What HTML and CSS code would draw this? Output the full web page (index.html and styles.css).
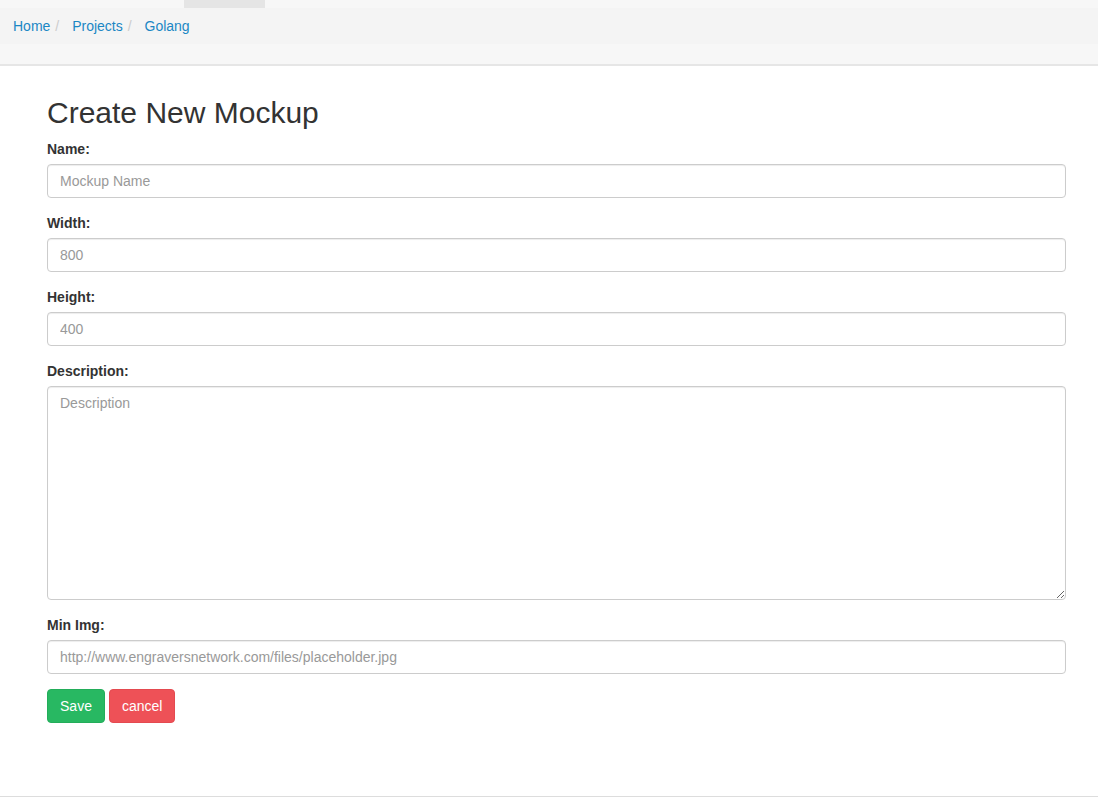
FILE: index.html
```html
<!DOCTYPE html>
<html>
<head>
<meta charset="utf-8">
<link rel="stylesheet" href="styles.css">
</head>
<body>
<div class="topstrip"><div class="tab"></div></div>
<div class="header">
  <ol class="breadcrumb">
    <li><a href="#">Home</a></li>
    <li><a href="#">Projects</a></li>
    <li><a href="#">Golang</a></li>
  </ol>
  <div class="subbar"></div>
</div>
<main class="content">
  <h2 class="title">Create New Mockup</h2>
  <form class="form">
    <div class="group">
      <label class="label">Name:</label>
      <input class="control" type="text" placeholder="Mockup Name">
    </div>
    <div class="group">
      <label class="label">Width:</label>
      <input class="control" type="text" placeholder="800">
    </div>
    <div class="group">
      <label class="label">Height:</label>
      <input class="control" type="text" placeholder="400">
    </div>
    <div class="group">
      <label class="label">Description:</label>
      <textarea class="control area" placeholder="Description"></textarea>
    </div>
    <div class="group">
      <label class="label">Min Img:</label>
      <input class="control" type="text" placeholder="http://www.engraversnetwork.com/files/placeholder.jpg">
    </div>
    <div class="actions">
      <button type="button" class="btn save">Save</button>
      <button type="button" class="btn cancel">cancel</button>
    </div>
  </form>
</main>
<div class="footer"></div>
</body>
</html>
```
FILE: styles.css
```css
* { box-sizing: border-box; }
html, body { margin: 0; padding: 0; background: #fff; }
body {
  font-family: "Liberation Sans", Arial, sans-serif;
  font-size: 14px;
  line-height: 20px;
  color: #333;
}
.topstrip {
  height: 8px;
  background: #f7f7f7;
  padding-left: 184px;
}
.tab {
  width: 81px;
  height: 8px;
  background: #e5e5e5;
}
.header {
  background: #f7f7f7;
  border-bottom: 2px solid #e6e6e6;
}
.breadcrumb {
  margin: 0;
  padding: 8px 13px;
  list-style: none;
  background: #f4f4f4;
  height: 36px;
  display: flex;
}
.breadcrumb li { display: block; }
.breadcrumb li + li::before {
  content: "/\00a0";
  padding: 0 5px 0 5px;
  color: #ccc;
}
.breadcrumb a {
  color: #1b87c4;
  text-decoration: none;
}
.breadcrumb li + li a { margin-left: 4px; }
.subbar { height: 20px; }
.content {
  padding: 30px 32px 0 47px;
  height: 730px;
}
.title {
  margin: 0 0 10px;
  font-size: 30px;
  font-weight: 500;
  line-height: 33px;
  color: #333;
}
.form { width: 1019px; }
.group {
  display: flex;
  flex-direction: column;
  margin-bottom: 15px;
}
.label {
  font-weight: bold;
  margin-bottom: 5px;
  line-height: 20px;
}
.control {
  display: block;
  width: 100%;
  height: 34px;
  padding: 6px 12px;
  font-family: "Liberation Sans", Arial, sans-serif;
  font-size: 14px;
  line-height: 20px;
  color: #555;
  background: #fff;
  border: 1px solid #ccc;
  border-radius: 4px;
  box-shadow: inset 0 1px 1px rgba(0,0,0,0.075);
  margin: 0;
}
.control::placeholder { color: #999; }
.area { height: 214px; resize: vertical; }
.actions { display: flex; gap: 4px; }
.btn {
  height: 34px;
  padding: 6px 12px;
  font-family: "Liberation Sans", Arial, sans-serif;
  font-size: 14px;
  line-height: 20px;
  color: #fff;
  border-radius: 4px;
  border: 1px solid transparent;
  margin: 0;
}
.save { background: #28b862; border-color: #23ad5a; width: 58px; }
.cancel { background: #ee5157; border-color: #e44a50; width: 66px; }
.footer {
  border-top: 1px solid #ddd;
  height: 15px;
}
```
